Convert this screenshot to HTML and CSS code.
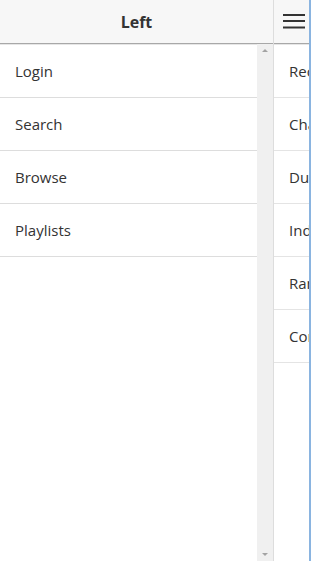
FILE: index.html
```html
<!DOCTYPE html>
<html lang="en">
<head>
    <meta charset="UTF-8">
    <title>Left</title>
    <link rel="stylesheet" href="styles.css">
</head>
<body>
<div class="shell">
    <div class="side">
        <div class="bar">Left</div>
        <div class="side-body">
            <ul class="menu">
                <li>Login</li>
                <li>Search</li>
                <li>Browse</li>
                <li>Playlists</li>
            </ul>
            <div class="scroll">
                <span class="arrow up"></span>
                <span class="arrow down"></span>
            </div>
        </div>
    </div>
    <div class="main">
        <div class="bar main-bar">
            <svg width="22" height="15" viewBox="0 0 22 15">
                <rect x="0" y="0" width="22" height="2" fill="#333"/>
                <rect x="0" y="6" width="22" height="2" fill="#333"/>
                <rect x="0" y="12.5" width="22" height="2" fill="#333"/>
            </svg>
        </div>
        <ul class="menu">
            <li>Recent</li>
            <li>Charts</li>
            <li>Duplicates</li>
            <li>Index</li>
            <li>Random</li>
            <li>Config</li>
        </ul>
    </div>
    <div class="edge"></div>
</div>
</body>
</html>
```

FILE: styles.css
```css
*{
    margin: 0;
    padding: 0;
    box-sizing: border-box;
}
html,body{
    width: 100%;
    height: 100%;
}
body{
    background: #fff;
    font-family: "Open Sans", "Noto Sans", sans-serif;
    color: #333;
    overflow: hidden;
}
.shell{
    display: flex;
    height: 100%;
}
.side{
    width: 274px;
    flex: none;
    display: flex;
    flex-direction: column;
    border-right: 1px solid #ddd;
}
.bar{
    height: 44px;
    flex: none;
    background: #f7f7f7;
    border-bottom: 1px solid #a8a8a8;
    box-shadow: 0 1px 0 #e6e6e6;
    display: flex;
    align-items: center;
    justify-content: center;
    font-size: 16px;
    font-weight: bold;
}
.side-body{
    flex: 1;
    display: flex;
}
.side-body .menu{
    flex: 1;
}
.menu{
    list-style: none;
    padding-top: 1px;
}
.menu li{
    height: 53px;
    padding-left: 15px;
    border-bottom: 1px solid #ddd;
    display: flex;
    align-items: center;
    font-size: 15px;
    white-space: nowrap;
    overflow: hidden;
}
.scroll{
    width: 16px;
    background: #f0f0f0;
    display: flex;
    flex-direction: column;
    justify-content: space-between;
    align-items: center;
    padding: 5px 0 5px;
}
.arrow{
    width: 0;
    height: 0;
    border-left: 3px solid transparent;
    border-right: 3px solid transparent;
}
.arrow.up{
    border-bottom: 3px solid #a3a3a3;
}
.arrow.down{
    border-top: 3px solid #a3a3a3;
}
.main{
    flex: 1;
    min-width: 0;
    overflow: hidden;
}
.main-bar{
    justify-content: flex-start;
    padding-left: 9px;
    padding-bottom: 1px;
}
.main .menu li{
    border-bottom-color: #e4e4e4;
}
.edge{
    width: 4px;
    flex: none;
    border-left: 2px solid #8ab4e0;
    background: #fff;
}
```
